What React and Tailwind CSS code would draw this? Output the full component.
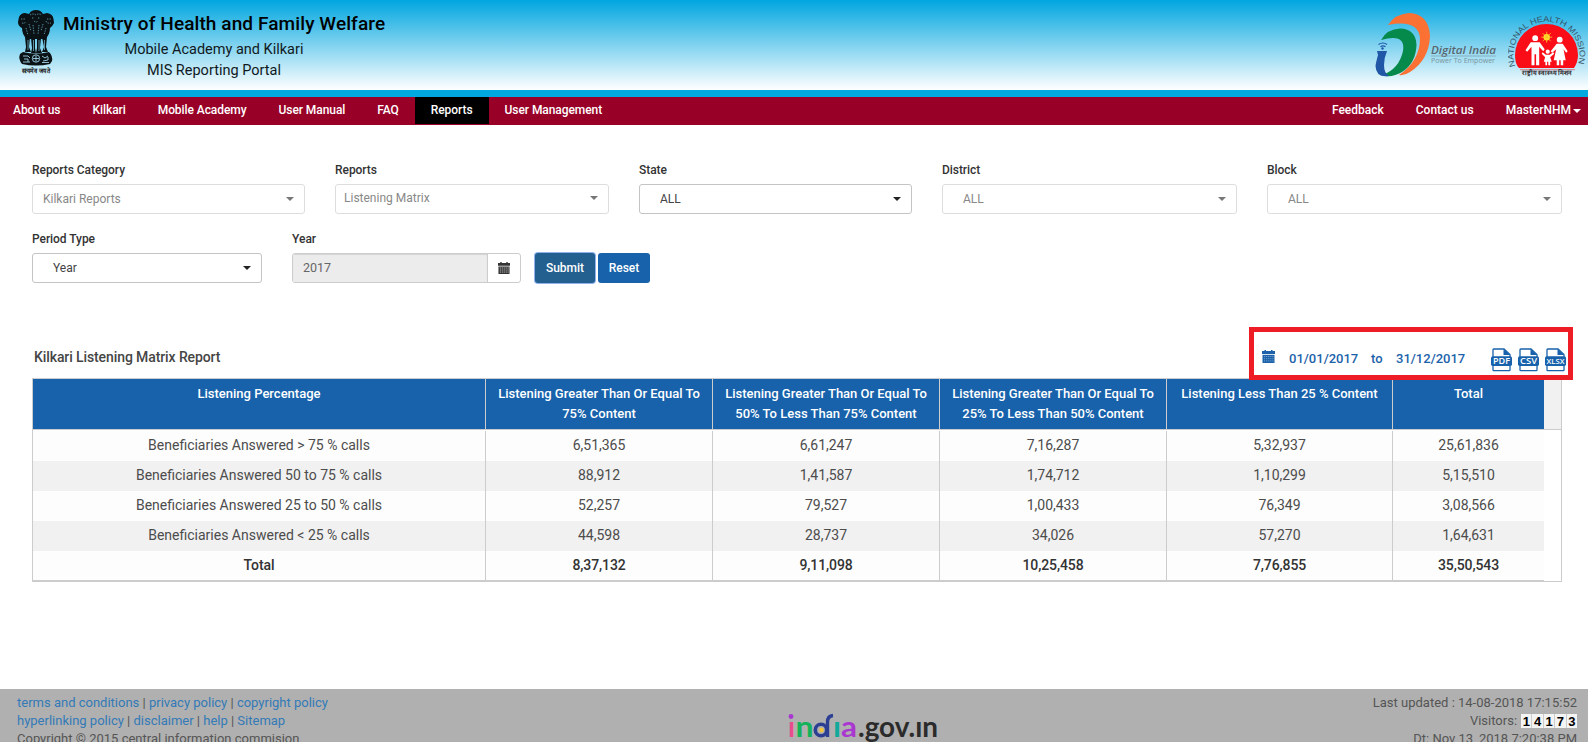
import React from "react";

const leftNav = ["About us", "Kilkari", "Mobile Academy", "User Manual", "FAQ", "Reports", "User Management"];

const columns = [
  ["Listening Percentage"],
  ["Listening Greater Than Or Equal To", "75% Content"],
  ["Listening Greater Than Or Equal To", "50% To Less Than 75% Content"],
  ["Listening Greater Than Or Equal To", "25% To Less Than 50% Content"],
  ["Listening Less Than 25 % Content"],
  ["Total"],
];

const rows = [
  ["Beneficiaries Answered > 75 % calls", "6,51,365", "6,61,247", "7,16,287", "5,32,937", "25,61,836"],
  ["Beneficiaries Answered 50 to 75 % calls", "88,912", "1,41,587", "1,74,712", "1,10,299", "5,15,510"],
  ["Beneficiaries Answered 25 to 50 % calls", "52,257", "79,527", "1,00,433", "76,349", "3,08,566"],
  ["Beneficiaries Answered < 25 % calls", "44,598", "28,737", "34,026", "57,270", "1,64,631"],
  ["Total", "8,37,132", "9,11,098", "10,25,458", "7,76,855", "35,50,543"],
];

const gridCols = "grid grid-cols-[453px_227px_227px_227px_226px_151px]";

function Emblem() {
  return (
    <svg width="38" height="66" viewBox="0 0 38 66" className="shrink-0">
      <g fill="#0b1216">
        <path d="M12 4 Q14 0 19 0 Q24 0 26 4 L30 3 Q36 4 36.500 9 L37 13 Q35 17 33 18 Q33 25 28 29 L10 29 Q5 25 5 18 Q1 16 1 12 L2 7 Q4 3 8 3 Z" />
        <path d="M8 27 L13 27 L12 37 L14 42 L8 42 L9 37 Z M14 28 L18 28 L18 38 L19 43 L14 43 L15 38 Z M20 28 L24 28 L23 38 L25 43 L19 43 L20 38 Z M25 27 L30 27 L29 37 L31 42 L25 42 L27 37 Z" />
        <path d="M6 42 Q19 45 32 42 Q36 46 35 51 L33 54 Q19 57 5 54 Q1 49 3 44 Z" />
      </g>
      <g fill="none" stroke="#7cc6df" strokeWidth="0.700">
        <path d="M13 5 Q16 3 19 5 Q22 3 25 5 M15 8 h2 M21 8 h2 M17 11 Q19 13 21 11 M4 9 h4 M30 9 h4 M5 13 Q8 14 9 11 M29 11 Q30 14 34 13 M12 14 L14 21 M16 15 L17 24 M22 15 L21 24 M26 14 L24 21 M9 18 L11 25 M29 18 L27 25" strokeDasharray="1.300 1.200" />
        <path d="M11 30 V40 M16.500 30 V41 M22 30 V41 M27.500 30 V40" strokeWidth="0.700" />
      </g>
      <g fill="none" stroke="#9fd3e6" strokeWidth="0.900">
        <circle cx="19" cy="48.500" r="3.700" />
        <path d="M16 48.500 h6 M19 45.500 v6 M6 46 h5 l2 2 M7 49 h4 v3 M25 46 l3 2 l3 -2 M26 51 l5 -1 v-3 M6 52 h7 M25 52.500 h7" />
      </g>
      <text x="19" y="63" textAnchor="middle" fontSize="6.500" fontWeight="700" textLength="29" lengthAdjust="spacingAndGlyphs" fill="#111">सत्यमेव जयते</text>
    </svg>
  );
}

function DigitalIndia() {
  return (
    <svg width="124" height="66" viewBox="0 0 124 66" className="shrink-0">
      <path d="M13 12 Q20 1 34 0 Q54 1 55 23 Q54 47 35 59 Q29 63 24 62 Q45 48 45 25 Q43 6 13 12 Z" fill="#fb7033" />
      <path d="M6 27 Q12 16 25 15.500 Q41 16 41.500 32 Q41 50 27 59 Q19 64 10 63 L8 61.500 Q24 56 28 38 Q31 20 6 27 Z" fill="#068a4c" />
      <path d="M2 38 H12 Q9 45 9 52 Q9 60 14 63 Q1 65 0.500 53 Q1 49 3 42 Z" fill="#2057a7" />
      <circle cx="7.500" cy="35.500" r="1.200" fill="#2057a7" />
      <path d="M3.500 31.500 Q8 28.500 12 31.500 M5.500 33.700 Q8 32 10.500 33.700" fill="none" stroke="#2057a7" strokeWidth="1.200" />
      <text x="56" y="41" fontFamily="Open Sans, sans-serif" fontSize="11.500" fontWeight="600" fontStyle="italic" textLength="65" lengthAdjust="spacingAndGlyphs" fill="#59666e">Digital India</text>
      <path d="M56 43 H121" stroke="#7d929c" strokeWidth="0.600" />
      <text x="56" y="49.500" fontFamily="Open Sans, sans-serif" fontSize="6.500" textLength="64" lengthAdjust="spacingAndGlyphs" fill="#7b949e">Power To Empower</text>
    </svg>
  );
}

function HealthMission() {
  return (
    <svg width="80" height="68" viewBox="0 0 80 68" className="shrink-0">
      <defs>
        <path id="missionArc" d="M7.500 53 A33 33 0 1 1 69.500 53" />
      </defs>
      <path d="M11 55 Q7 51 7 42 A31.500 31 0 0 1 70 42 Q70 49 66 55 Z" fill="#fb0d18" />
      <path d="M12 56.700 H67" stroke="#e55d68" strokeWidth="0.800" />
      <text fontFamily="Liberation Sans, sans-serif" fontSize="8" fill="#35576a">
        <textPath href="#missionArc" textLength="124" lengthAdjust="spacingAndGlyphs">NATIONAL HEALTH MISSION</textPath>
      </text>
      <g transform="translate(-1.300 2.200)">
        <circle cx="40" cy="22" r="3.200" fill="#ffe629" />
        <path d="M40 16.500 V27.500 M34.500 22 H45.500 M36 18 L44 26 M44 18 L36 26" stroke="#ffc52a" strokeWidth="0.800" />
        <g fill="#fff">
          <circle cx="28.500" cy="23" r="2.900" />
          <path d="M24 27 H33 L38 34 L36.500 36 L32.500 31.500 V50 H29.400 V39 H27.800 V50 H24.800 V31.500 L20.500 36.500 L18.800 35 Z" />
          <circle cx="53" cy="24.500" r="2.900" />
          <path d="M50 28.500 H56 L61 36 L59.500 37.500 L56.800 34 L59 45 H56.500 V50 H54 V45 H52.500 V50 H50 V45 H47 L49.500 34 L45.500 37.500 L44 36 Z" />
          <circle cx="41" cy="36.500" r="2.100" />
          <path d="M39 39.500 H43 L46.500 37 L47.500 38.500 L43.500 42 L45 46.500 H43.500 V50 H41.600 V46.500 H40.400 V50 H38.700 V46.500 H37 L38.500 42 L35 38.500 L36 37 Z" />
        </g>
      </g>
      <text x="39" y="61.800" textAnchor="middle" fontSize="6.500" fontWeight="700" textLength="50" lengthAdjust="spacingAndGlyphs" fill="#30292d">राष्ट्रीय स्वास्थ्य मिशन</text>
    </svg>
  );
}

function Calendar({ className, dot }) {
  return (
    <svg viewBox="0 0 13 13" className={className} fill="currentColor">
      <path d="M2.500 0 H4 V1 H9 V0 H10.500 V1 H13 V4 H0 V1 H2.500 Z" />
      <path d="M0.500 4.800 H12.500 V13 H0.500 Z" />
      <path d="M2 6.500 H11.500 M2 8.700 H11.500 M2 10.900 H11.500" stroke={dot} strokeWidth="0.800" strokeDasharray="1.100 1" />
    </svg>
  );
}

function FileIcon({ label }) {
  return (
    <svg width="21" height="24" viewBox="0 0 21 24" className="shrink-0">
      <path d="M2 9 V1.700 Q2 1 2.700 1 H13 L19 6.500 V9 M2 16 V22 Q2 22.700 2.700 22.700 H18.300 Q19 22.700 19 22 V16" fill="#fff" stroke="#1862ab" strokeWidth="1.300" />
      <path d="M12.500 1 V7 H19 Z" fill="#1862ab" />
      <rect x="0" y="8.300" width="21" height="9.700" rx="1.800" fill="#1862ab" />
      <text x="10.500" y="16" textAnchor="middle" fontFamily="Open Sans, sans-serif" fontWeight="600" fontSize={label.length > 3 ? 7.500 : 8.500} textLength={label.length > 3 ? 18 : 17} lengthAdjust="spacingAndGlyphs" fill="#fff">{label}</text>
    </svg>
  );
}

function Caret({ className }) {
  return (
    <svg width="8" height="4" viewBox="0 0 8 4" className={className} fill="currentColor">
      <path d="M0 0 H8 L4 4 Z" />
    </svg>
  );
}

function Field({ label, value, width, inset, muted }) {
  return (
    <div className={`flex shrink-0 flex-col ${width}`}>
      <label className="h-5 text-[12px] leading-5 font-medium tracking-[-0.05px] text-[#333]">{label}</label>
      <div className={`mt-1 flex h-[30px] items-center justify-between rounded-[3px] border bg-white pr-2.5 text-[12px] ${inset} ${muted ? "border-[#ddd] text-[#888]" : "border-[#c4c4c4] text-[#444]"}`}>
        <span>{value}</span>
        <Caret className={muted ? "text-[#777]" : "text-[#222]"} />
      </div>
    </div>
  );
}

export default function App() {
  return (
    <div className="flex h-[742px] w-[1588px] flex-col overflow-hidden bg-white font-['Roboto',sans-serif] text-[#333]">
      <header className="flex h-[97px] shrink-0 items-start justify-between border-b-[7px] border-[#00a9e0] bg-linear-to-b/srgb from-[#00a6e0] to-white bg-origin-padding pl-[17px] text-black">
        <div className="flex">
          <div className="pt-2.5"><Emblem /></div>
          <div className="ml-2 w-[322px] whitespace-nowrap pt-3">
            <div className="text-center text-[19px] leading-6 font-medium tracking-[0.1px]">Ministry of Health and Family Welfare</div>
            <div className="mt-[3px] w-[302px] text-center text-[14.500px] leading-[22px] text-[#10191d]">Mobile Academy and Kilkari</div>
            <div className="w-[302px] text-center text-[14.500px] leading-[20px] text-[#10191d]">MIS Reporting Portal</div>
          </div>
        </div>
        <div className="flex pt-[13px]">
          <DigitalIndia />
          <div className="ml-[9px]"><HealthMission /></div>
        </div>
      </header>

      <nav className="flex h-7 shrink-0 justify-between bg-[#990027] text-[12px] leading-[26px] font-medium text-white">
        <div className="-ml-[3px] flex tracking-[-0.07px]">
          {leftNav.map((item) => (
            <a key={item} className={`h-[27px] px-4 ${item === "Reports" ? "bg-black" : ""}`}>{item}</a>
          ))}
        </div>
        <div className="flex pr-[7px]">
          <a className="px-4">Feedback</a>
          <a className="px-4">Contact us</a>
          <a className="flex h-[26px] items-center gap-0.5 pl-4">MasterNHM <Caret className="mt-0.5" /></a>
        </div>
      </nav>

      <main className="flex flex-1 flex-col px-8 pt-[35px]">
        <div className="flex gap-[30px]">
          <Field label="Reports Category" value="Kilkari Reports" width="w-[273px]" inset="pl-2.5" muted />
          <Field label="Reports" value="Listening Matrix" width="w-[274px]" inset="pl-2 pb-0.5" muted />
          <Field label="State" value="ALL" width="w-[273px]" inset="pl-5" />
          <Field label="District" value="ALL" width="w-[295px]" inset="pl-5" muted />
          <Field label="Block" value="ALL" width="w-[295px]" inset="pl-5" muted />
        </div>
        <div className="mt-[15px] flex">
          <Field label="Period Type" value="Year" width="w-[230px]" inset="pl-5" />
          <div className="ml-[30px] w-[229px]">
            <label className="block h-5 text-[12px] leading-5 font-medium">Year</label>
            <div className="mt-1 flex h-[30px] overflow-hidden rounded-[3px] border border-[#ccc]">
              <div className="flex flex-1 items-center border-r border-[#ccc] bg-[#ececec] pl-2.5 text-[12.500px] text-[#666] shadow-[inset_0_1px_1px_rgba(0,0,0,0.1)]">2017</div>
              <div className="flex w-8 items-center justify-center"><Calendar className="h-3 w-3 text-[#333]" dot="#fff" /></div>
            </div>
          </div>
          <div className="ml-[14px] flex gap-[3px] pt-6 text-[12px] font-medium text-white">
            <button className="h-[30px] w-[60px] rounded-[3px] bg-[#235f8f] shadow-[0_0_0_1px_#8fb2ee]">Submit</button>
            <button className="h-[30px] w-[52px] rounded-[3px] bg-[#1762ab]">Reset</button>
          </div>
        </div>

        <section className="mt-11 flex flex-col">
          <div className="relative z-10 -mr-[17px] flex h-[53px] justify-between">
            <h2 className="pt-5 pl-0.5 text-[14px] leading-5 font-medium tracking-[-0.1px] text-[#454545]">Kilkari Listening Matrix Report</h2>
            <div className="flex h-[53px] w-[324px] border-[5px] border-[#ee1c25] bg-white pl-2 text-[13px] leading-4 font-medium text-[#1b62aa]">
              <Calendar className="mt-[18px] h-[13px] w-[13px] shrink-0" dot="#8db4d8" />
              <span className="mt-[19px] ml-[14px] w-[82px]">01/01/2017</span>
              <span className="mt-[19px] w-[25px]">to</span>
              <span className="mt-[19px] w-[95px]">31/12/2017</span>
              <div className="mt-[16px] flex gap-[6px]">
                <FileIcon label="PDF" />
                <FileIcon label="CSV" />
                <FileIcon label="XLSX" />
              </div>
            </div>
          </div>

          <div className="-mt-0.5 h-[204px] w-[1530px] border border-[#ccc] text-center">
            <div className="flex h-[51px] border-b border-[#ccc] bg-[#f1f1f1]">
              <div className={`${gridCols} bg-[#1762ab] text-[13px] leading-5 font-medium text-white`}>
                {columns.map((lines, i) => (
                  <div key={i} className={`whitespace-nowrap pt-[5px] ${i < 5 ? "border-r border-[#ccc]" : ""}`}>
                    {lines.map((line) => <div key={line}>{line}</div>)}
                  </div>
                ))}
              </div>
            </div>
            <div className="w-[1511px] border-b border-[#ccc] pt-px">
              {rows.map((row, r) => (
                <div key={r} className={`${gridCols} text-[14px] ${r === 4 ? "h-[29px] font-medium tracking-[-0.1px] text-[#333]" : "h-[30px] text-[#4c4c4c]"} ${r % 2 ? "bg-[#f1f1f1]" : "bg-[#fdfdfd]"}`}>
                  {row.map((cell, i) => (
                    <div key={i} className={`leading-[29px] ${i < 5 ? "border-r border-[#ccc]" : ""}`}>{cell}</div>
                  ))}
                </div>
              ))}
            </div>
          </div>
        </section>
      </main>

      <footer className="flex h-[53px] shrink-0 overflow-hidden bg-[#b0b0b0] pr-[11px] pl-[17px] pt-[5px] text-[13px] leading-[18px] text-[#555]">
        <div className="w-[770px] shrink-0">
          <div><a className="text-[#337ab7]">terms and conditions</a> | <a className="text-[#337ab7]">privacy policy</a> | <a className="text-[#337ab7]">copyright policy</a></div>
          <div><a className="text-[#337ab7]">hyperlinking policy</a> | <a className="text-[#337ab7]">disclaimer</a> | <a className="text-[#337ab7]">help</a> | <a className="text-[#337ab7]">Sitemap</a></div>
          <div>Copyright © 2015 central information commision</div>
        </div>
        <svg width="154" height="60" viewBox="0 0 154 60" className="shrink-0">
          <g fontFamily="Lato, sans-serif" fontSize="28" fontWeight="700">
            <text x="1" y="43" textLength="7" lengthAdjust="spacingAndGlyphs" fill="#e94b8f">ı</text>
            <text x="8.500" y="43" textLength="18" lengthAdjust="spacingAndGlyphs" fill="#13b35b">n</text>
            <text x="46" y="43" textLength="8" lengthAdjust="spacingAndGlyphs" fill="#12a99b">ı</text>
            <text x="54" y="43" textLength="16" lengthAdjust="spacingAndGlyphs" fill="#a937d0">a</text>
            <text x="71" y="43" textLength="80" lengthAdjust="spacingAndGlyphs" fill="#2b2b2b">.gov.ın</text>
          </g>
          <circle cx="4" cy="22.500" r="2.400" fill="#a937d0" />
          <circle cx="34" cy="36" r="5.700" fill="none" stroke="#2c3f92" strokeWidth="3.600" />
          <path d="M40.500 43 V28 Q40.500 22 46 21.500" fill="none" stroke="#2c3f92" strokeWidth="3.400" />
          <circle cx="34.500" cy="36" r="2.200" fill="#f7c531" />
        </svg>
        <div className="flex-1 text-right">
          <div>Last updated : 14-08-2018 17:15:52</div>
          <div className="flex h-[18px] items-center justify-end gap-1">
            <span>Visitors:</span>
            <span className="flex h-[14px] gap-px bg-[#ccc] text-[13px] leading-[15px] font-bold text-black">
              {["1", "4", "1", "7", "3"].map((d, i) => <span key={i} className="w-[10.400px] bg-[#f4f4f4] text-center font-['Liberation_Sans',sans-serif]">{d}</span>)}
            </span>
          </div>
          <div>Dt: Nov 13, 2018 7:20:38 PM</div>
        </div>
      </footer>
    </div>
  );
}
